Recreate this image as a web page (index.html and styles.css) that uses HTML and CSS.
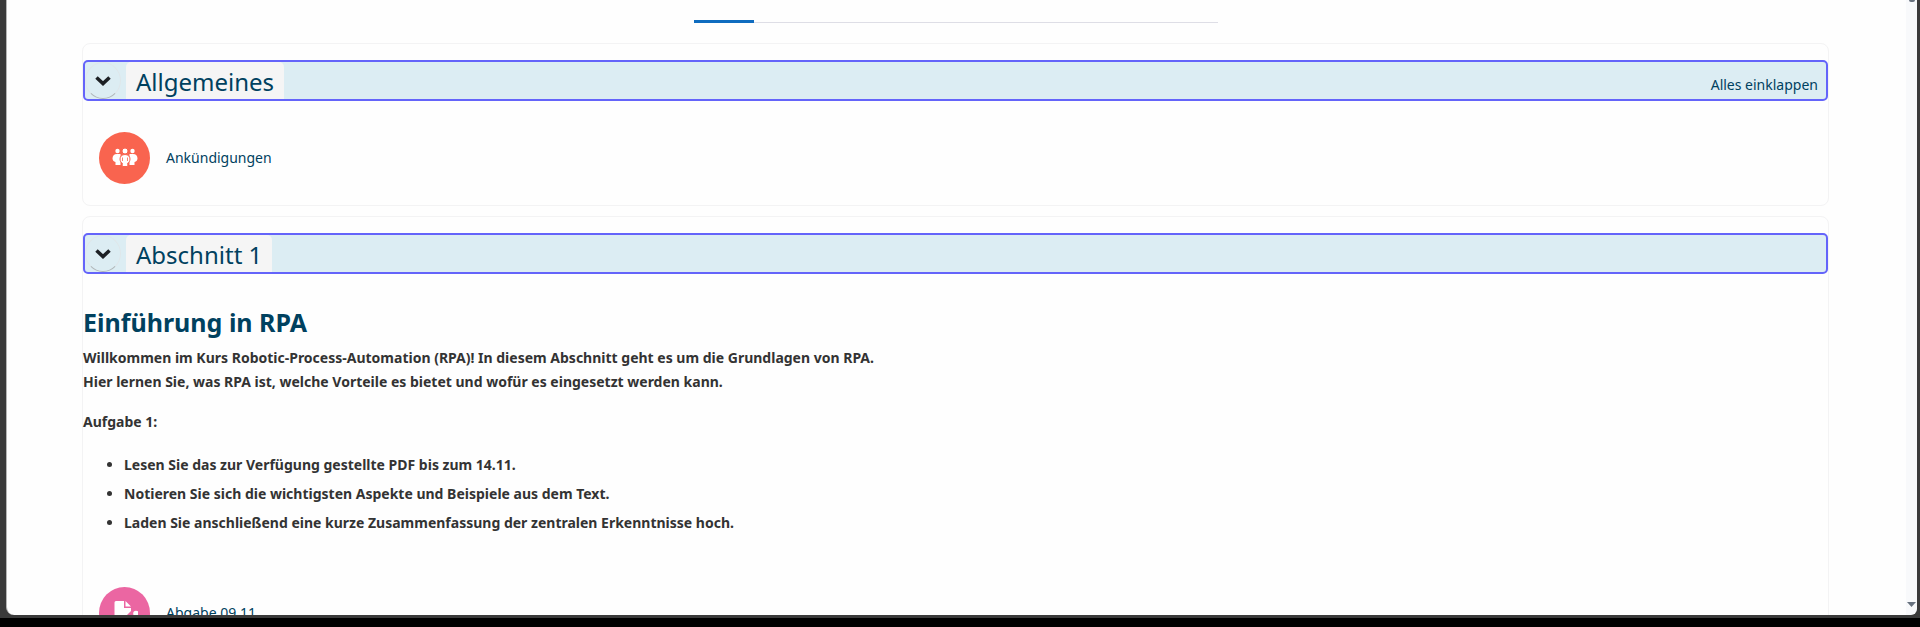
FILE: index.html
```html
<!DOCTYPE html>
<html lang="de">
<head>
<meta charset="utf-8">
<title>Kurs</title>
<link rel="stylesheet" href="styles.css">
</head>
<body>
<div class="window">
  <main class="page">
    <div class="tabs"><div class="tab-active"></div></div>

    <section class="card">
      <header class="bar">
        <button class="toggle" type="button" aria-label="Allgemeines einklappen">
          <svg width="16" height="10" viewBox="0 0 16 10"><path d="M1.500 1.500l6.500 6 6.500-6" fill="none" stroke="#1d2125" stroke-width="3.600"/></svg>
        </button>
        <h2 class="title"><a href="#allgemeines">Allgemeines</a></h2>
        <button class="collapse" type="button">Alles einklappen</button>
      </header>
      <div class="activity">
        <span class="icon icon-forum">
          <svg width="26" height="20" viewBox="0 0 26 20">
            <g fill="#fff">
              <circle cx="5.500" cy="3" r="2.200"/><circle cx="20.500" cy="3" r="2.200"/>
              <path d="M5 6h3.500v11H3.500v-3C1.500 13.500.5 12 .5 10.500.5 8 2 6 5 6z"/>
              <path d="M21 6h-3.500v11h5v-3c2-.5 3-2 3-3.500C25.500 8 24 6 21 6z"/>
            </g>
            <g fill="#fff" stroke="#f9644f" stroke-width="1">
              <circle cx="13" cy="3" r="3"/>
              <path d="M13 6.500c3.200 0 5 2 5 4.500 0 2-1 3.500-2.200 4v3.500h-5.600V15C9 14.500 8 13 8 11c0-2.500 1.800-4.500 5-4.500z"/>
            </g>
            <path d="M10.500 9.500v3.500M15.500 9.500v3.500" stroke="#f9644f" stroke-width=".8"/>
          </svg>
        </span>
        <a href="#ankuendigungen">Ankündigungen</a>
      </div>
    </section>

    <section class="card">
      <header class="bar">
        <button class="toggle" type="button" aria-label="Abschnitt 1 einklappen">
          <svg width="16" height="10" viewBox="0 0 16 10"><path d="M1.500 1.500l6.500 6 6.500-6" fill="none" stroke="#1d2125" stroke-width="3.600"/></svg>
        </button>
        <h2 class="title"><a href="#abschnitt-1">Abschnitt 1</a></h2>
      </header>
      <div class="summary">
        <h3>Einführung in RPA</h3>
        <p>Willkommen im Kurs Robotic-Process-Automation (RPA)! In diesem Abschnitt geht es um die Grundlagen von RPA.<br>Hier lernen Sie, was RPA ist, welche Vorteile es bietet und wofür es eingesetzt werden kann.</p>
        <p>Aufgabe 1:</p>
        <ul>
          <li>Lesen Sie das zur Verfügung gestellte PDF bis zum 14.11.</li>
          <li>Notieren Sie sich die wichtigsten Aspekte und Beispiele aus dem Text.</li>
          <li>Laden Sie anschließend eine kurze Zusammenfassung der zentralen Erkenntnisse hoch.</li>
        </ul>
      </div>
      <div class="activity">
        <span class="icon icon-task">
          <svg width="26" height="24" viewBox="0 0 26 24">
            <path d="M4 0h8v7h7v3l-4 4v9H4a1.500 1.500 0 0 1-1.500-1.500v-20A1.500 1.500 0 0 1 4 0z" fill="#fff"/>
            <path d="M13.500 0L19 5.500h-5.500z" fill="#fff"/>
            <circle cx="24" cy="12.500" r="2.800" fill="#fff"/>
          </svg>
        </span>
        <a href="#abgabe">Abgabe 09.11</a>
      </div>
    </section>
  </main>
  <div class="scrollbar" aria-hidden="true">
    <span class="thumb"></span>
    <svg width="9" height="5" viewBox="0 0 9 5"><path d="M0 0h9L4.500 5z" fill="#68727f"/></svg>
  </div>
</div>
</body>
</html>
```
FILE: styles.css
```css
* { box-sizing: border-box; }

body {
  margin: 0;
  height: 100vh;
  padding-bottom: 9px;
  overflow: hidden;
  background: #000;
  color: #333;
  font-family: "Segoe UI", "Noto Sans", sans-serif;
  font-size: 14px;
  line-height: 24px;
}

a { color: #00415f; text-decoration: none; }

button {
  padding: 0;
  border: 0;
  background: none;
  color: #00415f;
  font: inherit;
  cursor: pointer;
}

.window {
  display: flex;
  height: 100%;
  padding: 0 3px 3px 6px;
  background: #3a3a3a;
}

.page {
  flex: 1;
  height: 100%;
  overflow: hidden;
  padding: 0 77px 0 75px;
  border-left: 1px solid #b5b5b5;
  border-bottom-left-radius: 8px;
  background: #fefefe;
}

.scrollbar {
  display: flex;
  flex-direction: column;
  justify-content: space-between;
  align-items: center;
  width: 11px;
  padding-bottom: 8px;
  border-bottom-right-radius: 6px;
  background: #f8f9fb;
}

.thumb {
  width: 6px;
  height: 2px;
  border-radius: 0 0 3px 3px;
  background: #68727f;
}

.tabs {
  width: 524px;
  max-width: 100%;
  margin: 0 auto 20px;
  padding-top: 20px;
  box-shadow: inset 0 -1px #dedee6;
}

.tab-active { width: 60px; height: 3px; background: #0f6cbf; }

.card {
  margin-bottom: 10px;
  padding: 16px 0 21px;
  border: 1px solid #f3f3f4;
  border-radius: 8px;
}

.bar {
  display: flex;
  align-items: stretch;
  height: 41px;
  padding-right: 8px;
  border: 2px solid #6464fa;
  border-radius: 5px;
  background: #dcedf3;
}

.toggle {
  display: flex;
  align-items: center;
  justify-content: center;
  width: 36px;
  margin-right: 5px;
  border: 1px solid #dfe7ea;
  border-bottom-color: #b1b7b9;
  border-radius: 50%;
}

.title {
  margin: 0;
  padding: 0 10px;
  border-radius: 5px 5px 0 0;
  background: #f5f5f5;
  font-size: 24px;
  font-weight: 400;
  line-height: 39px;
}

.collapse { margin-left: auto; padding-top: 8px; }

.activity {
  display: flex;
  align-items: center;
  gap: 16px;
  padding: 31px 16px 0;
}

.icon {
  display: flex;
  align-items: center;
  justify-content: center;
  width: 51px;
  height: 52px;
  border-radius: 50%;
}

.icon-forum { background: #f9644f; }
.icon-task { background: #eb66a2; }

.summary { padding-top: 32px; font-weight: 700; }

.summary h3 {
  margin: 0 0 8px;
  color: #00415f;
  font-size: 25px;
  line-height: 32px;
}

.summary p { margin: 0 0 16px; }

.summary ul { margin: 0 0 19px; padding: 0 0 0 41px; }

.summary li { padding: 3px 0 2px; }
```
